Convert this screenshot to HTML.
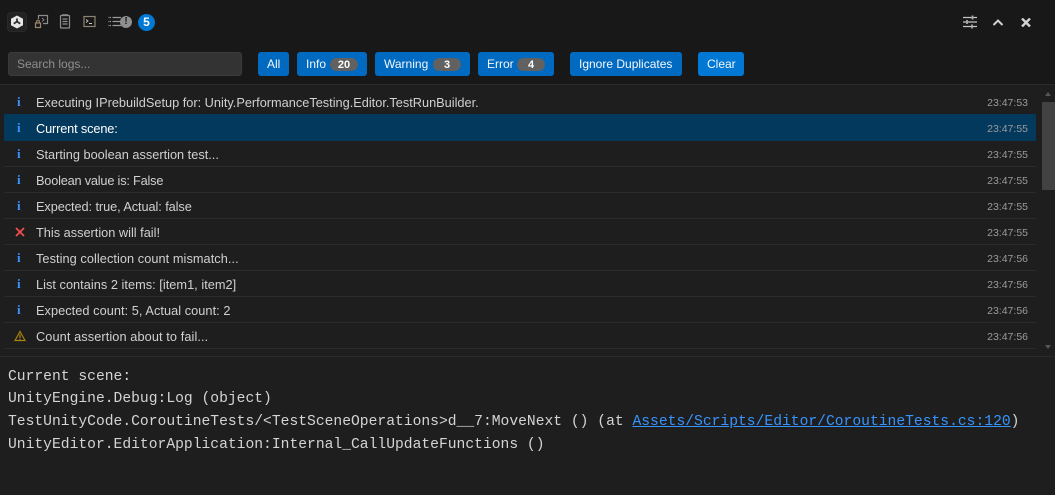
<!DOCTYPE html>
<html><head><meta charset="utf-8">
<style>
*{box-sizing:border-box}
html,body{margin:0;padding:0;width:1055px;height:495px;overflow:hidden;background:#1e1e1e}
body{position:relative;font-family:"Liberation Sans",sans-serif}
.abs{position:absolute}
#top{position:absolute;left:0;top:0;width:1055px;height:85px;background:#181818;border-bottom:1px solid #2b2b2b}
.btn{position:absolute;top:52px;height:24px;background:#0069c0;border-radius:3px;color:#f4f8fc;font-size:12px;line-height:24px;white-space:nowrap;text-align:left}
.pill{position:absolute;top:6px;height:13px;width:28px;background:#616161;border-radius:7px;color:#fff;font-size:11px;font-weight:bold;line-height:14px;text-align:center}
.row{position:absolute;left:4px;width:1032px;height:26px;border-bottom:1px solid #2b2b2b;font-size:12.75px;line-height:27px;color:#d0d0d0;white-space:nowrap}
.row.sel{background:#04395e;color:#fff;border-bottom-color:#04395e;box-shadow:0 -1px 0 #04395e}
.row .t{position:absolute;left:32px;top:0}
.row .tm{position:absolute;right:8px;top:1px;font-size:10.5px;color:#9a9a9a}
.row .i{position:absolute;left:13px;top:-1px;color:#3794ff;font-family:"Liberation Serif",serif;font-weight:bold;font-size:13px}
.row svg{position:absolute;left:10px;top:7px}
.m{position:absolute;left:8px;font-family:"Liberation Mono",monospace;font-size:14.67px;line-height:22px;color:#d4d4d4;white-space:pre}
.m a{color:#3794ff;text-decoration:underline}
</style></head>
<body>
<div id="top"></div>

<div class="abs" style="left:7px;top:12px;width:20px;height:20px;background:#222;border:1px solid #2a2a2a;border-radius:4px"></div>
<svg class="abs" style="left:10px;top:15px" width="14" height="14" viewBox="0 0 14 14">
<path d="M7 .5 13 3.700V10.300L7 13.500 1 10.300V3.700Z" fill="#e6e6e6"/>
<path d="M7 3.500V6.500M7 6.500 3.800 8.700M7 6.500l3.200 2.200" stroke="#2a2a2a" stroke-width="1.700" fill="none"/>
</svg>
<svg class="abs" style="left:34px;top:14px" width="15" height="15" viewBox="0 0 15 15" fill="none" stroke="#8b8b8b" stroke-width="1.200">
<path d="M4.500 5V1.500H13.500V9.500H9"/><path d="M8 4l2 1.700L8 7.500" stroke-width=".9"/><rect x="1.500" y="9" width="5" height="4.500" stroke="#9a8770"/><path d="M2.700 9V7.500a1.300 1.300 0 0 1 2.600 0V9" stroke="#9a8770"/>
</svg>
<svg class="abs" style="left:59px;top:14px" width="12" height="15" viewBox="0 0 12 15" fill="none" stroke="#8d8d8d" stroke-width="1.200">
<rect x="1.500" y="1.500" width="9" height="12.500" rx=".8"/><path d="M3.500 5h5M3.500 7.500h5M3.500 10h5M3 .8h6"/>
</svg>
<svg class="abs" style="left:83px;top:15px" width="13" height="13" viewBox="0 0 13 13" fill="none" stroke="#8d8474" stroke-width="1.200">
<rect x="1" y="1.500" width="11" height="10"/><path d="M3 4.500l2 1.500-2 1.500M6 8.500h3" stroke="#c8c8c8" stroke-width=".9"/>
</svg>
<svg class="abs" style="left:108px;top:16px" width="14" height="12" viewBox="0 0 14 12" fill="none" stroke="#9a9a9a" stroke-width="1.200">
<path d="M4.500 1.500H13M4.500 5.500H13M4.500 9.500H13"/><path d="M.5 1.500h2.500M.5 5.500h2.500M.5 9.500h2.500" stroke-dasharray="1 .5"/>
</svg>
<div class="abs" style="left:120px;top:16px;width:12px;height:12px;border-radius:50%;background:#8f8f8f;color:#1b1b1b;font-size:10px;font-weight:bold;line-height:12px;text-align:center">!</div>
<div class="abs" style="left:138px;top:14px;width:17px;height:17px;border-radius:50%;background:#0078d4;color:#fff;font-size:12px;font-weight:bold;line-height:17px;text-align:center">5</div>

<svg class="abs" style="left:962px;top:14px" width="16" height="16" viewBox="0 0 16 16" stroke="#c4c4c4" stroke-width="1.300" fill="none">
<path d="M1 3.500H15M1 8H15M1 12.500H15"/><path d="M10.500 1.500v4M5 6v4M10 10.500v4" stroke-width="1.800" stroke="#a9a9a9"/>
</svg>
<svg class="abs" style="left:992px;top:18px" width="12" height="9" viewBox="0 0 12 9" stroke="#d2d2d2" stroke-width="2" fill="none"><path d="M1.500 7 6 2.500 10.500 7"/></svg>
<svg class="abs" style="left:1021px;top:18px" width="10" height="9" viewBox="0 0 10 9" stroke="#d2d2d2" stroke-width="2.400" fill="none"><path d="M1 .500 9 8.500M9 .500 1 8.500"/></svg>

<div class="abs" style="left:8px;top:52px;width:234px;height:24px;background:#333;border:1px solid #3a3a3a;border-radius:3px;color:#8f8f8f;font-size:12px;line-height:22px;padding-left:8px">Search logs...</div>

<div class="btn" style="left:258px;width:31px;padding-left:9px">All</div>
<div class="btn" style="left:297px;width:70px;padding-left:9px">Info<span class="pill" style="left:33px">20</span></div>
<div class="btn" style="left:375px;width:95px;padding-left:9px">Warning<span class="pill" style="left:58px">3</span></div>
<div class="btn" style="left:478px;width:76px;padding-left:9px">Error<span class="pill" style="left:39px">4</span></div>
<div class="btn" style="left:570px;width:112px;padding-left:9px;background:#0069c0">Ignore Duplicates</div>
<div class="btn" style="left:698px;width:46px;padding-left:9px;background:#0078d4">Clear</div>

<div class="row" style="top:89px"><span class="i">i</span><span class="t">Executing IPrebuildSetup for: Unity.PerformanceTesting.Editor.TestRunBuilder.</span><span class="tm">23:47:53</span></div>
<div class="row sel" style="top:115px"><span class="i">i</span><span class="t" style="letter-spacing:-.14px">Current scene:</span><span class="tm">23:47:55</span></div>
<div class="row" style="top:141px"><span class="i">i</span><span class="t">Starting boolean assertion test...</span><span class="tm">23:47:55</span></div>
<div class="row" style="top:167px"><span class="i">i</span><span class="t" style="letter-spacing:-.2px">Boolean value is: False</span><span class="tm">23:47:55</span></div>
<div class="row" style="top:193px"><span class="i">i</span><span class="t" style="letter-spacing:-.08px">Expected: true, Actual: false</span><span class="tm">23:47:55</span></div>
<div class="row" style="top:219px"><svg width="12" height="12" viewBox="0 0 12 12" stroke="#f14c4c" stroke-width="1.800" fill="none"><path d="M2 2 10 10M10 2 2 10"/></svg><span class="t">This assertion will fail!</span><span class="tm">23:47:55</span></div>
<div class="row" style="top:245px"><span class="i">i</span><span class="t" style="letter-spacing:.06px">Testing collection count mismatch...</span><span class="tm">23:47:56</span></div>
<div class="row" style="top:271px"><span class="i">i</span><span class="t" style="letter-spacing:.03px">List contains 2 items: [item1, item2]</span><span class="tm">23:47:56</span></div>
<div class="row" style="top:297px"><span class="i">i</span><span class="t" style="letter-spacing:.05px">Expected count: 5, Actual count: 2</span><span class="tm">23:47:56</span></div>
<div class="row" style="top:323px"><svg width="12" height="12" viewBox="0 0 12 12" fill="none"><path d="M6 1.500 11 10.500H1Z" stroke="#a8820f" stroke-width="1.200"/><path d="M6 4.500V8M6 8.800v1" stroke="#d0a010" stroke-width="1"/></svg><span class="t" style="letter-spacing:.09px">Count assertion about to fail...</span><span class="tm">23:47:56</span></div>

<div class="abs" style="left:1042px;top:102px;width:13px;height:88px;background:#424242"></div>
<div class="abs" style="left:1045px;top:92px;width:0;height:0;border-left:3.500px solid transparent;border-right:3.500px solid transparent;border-bottom:4px solid #555"></div>
<div class="abs" style="left:1045px;top:345px;width:0;height:0;border-left:3.500px solid transparent;border-right:3.500px solid transparent;border-top:4px solid #555"></div>
<div class="abs" style="left:0;top:356px;width:1055px;height:1px;background:#2b2b2b"></div>

<div class="m" style="top:366px">Current scene:</div>
<div class="m" style="top:388px">UnityEngine.Debug:Log (object)</div>
<div class="m" style="top:411px">TestUnityCode.CoroutineTests/&lt;TestSceneOperations&gt;d__7:MoveNext () (at <a>Assets/Scripts/Editor/CoroutineTests.cs:120</a>)</div>
<div class="m" style="top:434px">UnityEditor.EditorApplication:Internal_CallUpdateFunctions ()</div>
</body></html>
